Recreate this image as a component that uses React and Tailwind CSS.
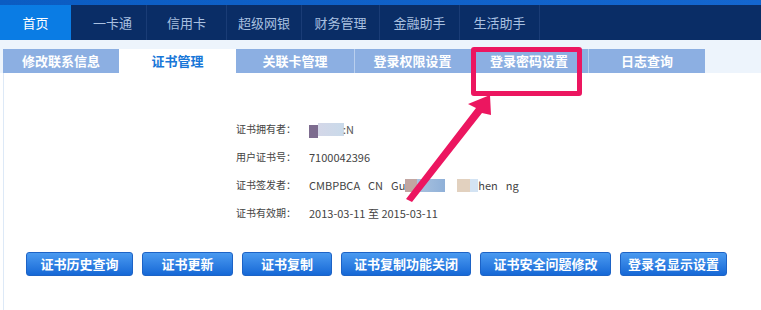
const NAV = ['一卡通', '信用卡', '超级网银', '财务管理', '金融助手', '生活助手']

const TABS = [
  { label: '修改联系信息', w: 'w-[116px]' },
  { label: '证书管理', w: 'w-[117px]', active: true },
  { label: '关联卡管理', w: 'w-[118px]' },
  { label: '登录权限设置', w: 'w-[116px]' },
  { label: '登录密码设置', w: 'w-[118px]' },
  { label: '日志查询', w: 'w-[117px]' },
]

const BUTTONS = [
  { label: '证书历史查询', w: 'w-[107px]' },
  { label: '证书更新', w: 'w-[91px]' },
  { label: '证书复制', w: 'w-[90px]' },
  { label: '证书复制功能关闭', w: 'w-[130px]' },
  { label: '证书安全问题修改', w: 'w-[131px]' },
  { label: '登录名显示设置', w: 'w-[107px]' },
]

function Blur({ className }) {
  return <span className={`inline-block h-[13px] ${className}`} />
}

export default function App() {
  return (
    <div className="relative w-[761px] h-[310px] overflow-hidden bg-white font-['Microsoft_YaHei','Noto_Sans_CJK_SC',sans-serif]">
      {/* top strip + nav */}
      <div className="h-[5px] bg-gradient-to-r from-[#0b5cc2] to-[#1466cf]" />
      <div className="flex h-[35px] bg-[#0a2d66] text-[13px]">
        <div className="w-[71px] flex items-center justify-center bg-[#0a7ce4] text-white">首页</div>
        {NAV.map((item, i) => (
          <div
            key={item}
            className={`flex items-center justify-center text-[#a9c0e0] border-r border-[#1a3c76] ${i === 0 ? 'w-[76px]' : i === 3 ? 'w-[78px]' : i === 2 ? 'w-[75px]' : 'w-[80px]'}`}
          >
            <span className={i === 0 ? 'pl-2' : ''}>{item}</span>
          </div>
        ))}
      </div>

      {/* sub tabs */}
      <div className="h-[33px] bg-[#edf4fc] pt-[9px] pl-[3px] flex">
        {TABS.map((t, i) => (
          <div
            key={t.label}
            className={`${t.w} h-[24px] flex items-center justify-center text-[13px] font-bold ${
              t.active ? 'bg-white text-[#1877d8]' : 'bg-[#8cafe2] text-white'
            } ${i === 3 || i === 5 ? 'border-l border-[#b9cfee]' : ''}`}
          >
            {t.label}
          </div>
        ))}
      </div>

      {/* content */}
      <div className="ml-[3px] h-[237px] border-l border-[#dde9f7] bg-white">
        <div className="pt-[48px] pl-[232px] text-[10px] text-[#444] flex flex-col gap-[12px] leading-[16px]">
          <div className="flex items-center">
            <span className="w-[73px]">证书拥有者：</span>
            <span className="flex items-center text-[11px]">
              <Blur className="w-[9px] bg-[#7d6c8f] translate-y-[2px]" />
              <Blur className="w-[26px] bg-gradient-to-r from-[#d4d7e8] to-[#c9daea]" />
              <span className="text-[#555] -ml-[1px]">:N</span>
            </span>
          </div>
          <div className="flex items-center">
            <span className="w-[73px]">用户证书号：</span>
            <span className="text-[11px]">7100042396</span>
          </div>
          <div className="flex items-center">
            <span className="w-[73px]">证书签发者：</span>
            <span className="flex items-center text-[11px]">
              <span>CMBPBCA</span>
              <span className="ml-[8px]">CN</span>
              <span className="ml-[8px]">Gu</span>
              <Blur className="w-[12px] bg-[#c2a6a2]" />
              <Blur className="w-[28px] bg-gradient-to-r from-[#a9c2df] to-[#8fb0d8]" />
              <span className="w-[12px]" />
              <Blur className="w-[13px] bg-[#e2d1bf]" />
              <Blur className="w-[8px] bg-[#d3e3f3]" />
              <span>hen</span>
              <span className="ml-[8px]">ng</span>
            </span>
          </div>
          <div className="flex items-center">
            <span className="w-[73px]">证书有效期：</span>
            <span className="text-[11px]">2013-03-11 至 2015-03-11</span>
          </div>
        </div>

        <div className="mt-[31px] pl-[22px] flex gap-[9px]">
          {BUTTONS.map(b => (
            <button
              key={b.label}
              className={`${b.w} h-[24px] rounded-[3px] border border-[#1d63c6] bg-gradient-to-b from-[#4a9af0] to-[#1568d6] text-white text-[13px] font-bold flex items-center justify-center`}
            >
              {b.label}
            </button>
          ))}
        </div>
      </div>

      {/* annotation: highlight box + arrow */}
      <div className="absolute left-[471px] top-[47px] w-[111px] h-[49px] border-[5px] border-[#ec1660] rounded-[3px]" />
      <svg className="absolute left-0 top-0 pointer-events-none" width="761" height="310">
        <polygon
          points="406,199 412,202 482,113 491,115 490,95 468,104 476,108"
          fill="#ec1660"
        />
      </svg>
    </div>
  )
}
